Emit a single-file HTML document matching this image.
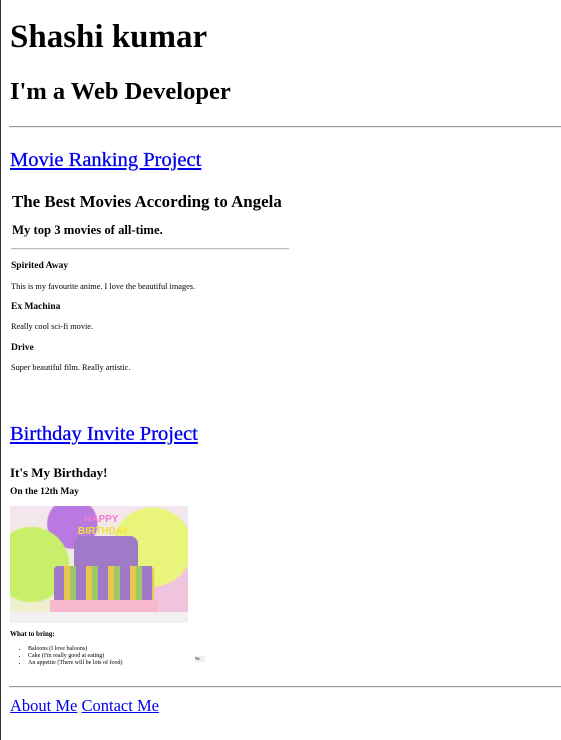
<!DOCTYPE html>
<html><head><meta charset="utf-8"><style>
html,body{margin:0;padding:0;width:561px;height:740px;overflow:hidden;background:#fff;font-family:"Liberation Serif",serif;color:#000}
body{border-left:1px solid #333;box-sizing:border-box;position:relative}
.a{position:absolute;left:9px;margin:0;white-space:nowrap;line-height:1}
a{color:#0000ee;text-decoration:underline}
.hr{position:absolute;height:0;border-top:1px solid #999;border-bottom:1px solid #eee}
ul{margin:0;padding-left:18px}
</style></head><body>
<div class="a" style="top:21px;font-size:33px;font-weight:bold">Shashi kumar</div>
<div class="a" style="top:80px;font-size:24.5px;font-weight:bold">I'm a Web Developer</div>
<div class="hr" style="left:8px;width:552px;top:126px"></div>
<div class="a" style="top:150px;font-size:20.5px;-webkit-text-stroke:0.3px #0000ee"><a>Movie Ranking Project</a></div>

<div class="a" style="top:194px;left:11px;font-size:16.9px;font-weight:bold">The Best Movies According to Angela</div>
<div class="a" style="top:224px;left:11px;font-size:12.7px;font-weight:bold">My top 3 movies of all-time.</div>
<div class="hr" style="left:10px;width:278px;top:248px;border-top-color:#bbb"></div>
<div class="a" style="top:262px;left:10px;font-size:9.5px;font-weight:bold">Spirited Away</div>
<div class="a" style="top:283px;left:10px;font-size:8.3px">This is my favourite anime. I love the beautiful images.</div>
<div class="a" style="top:303px;left:10px;font-size:9.5px;font-weight:bold">Ex Machina</div>
<div class="a" style="top:323px;left:10px;font-size:8.3px">Really cool sci-fi movie.</div>
<div class="a" style="top:344px;left:10px;font-size:9.5px;font-weight:bold">Drive</div>
<div class="a" style="top:364px;left:10px;font-size:8.3px">Super beautiful film. Really artistic.</div>

<div class="a" style="top:424px;font-size:20.5px;-webkit-text-stroke:0.3px #0000ee"><a>Birthday Invite Project</a></div>
<div class="a" style="top:466px;left:9px;font-size:13px;font-weight:bold">It's My Birthday!</div>
<div class="a" style="top:488px;left:9px;font-size:9.5px;font-weight:bold">On the 12th May</div>
<div style="position:absolute;left:9px;top:506px;width:178px;height:117px;overflow:hidden;background:radial-gradient(circle at 12% 50%,#c8ef6a 0,#c8ef6a 22%,transparent 23%),radial-gradient(circle at 35% 15%,#b87ae0 0,#b87ae0 16%,transparent 17%),radial-gradient(circle at 80% 35%,#e8f57a 0,#e8f57a 24%,transparent 25%),radial-gradient(circle at 92% 80%,#f0c4dc 0,#f0c4dc 18%,transparent 19%),linear-gradient(#f3e6ef,#eef0c8)">
 <div style="position:absolute;left:64px;top:30px;width:64px;height:36px;background:#9e7ac8;border-radius:8px"></div>
 <div style="position:absolute;left:44px;top:60px;width:100px;height:38px;background:repeating-linear-gradient(90deg,#a078c8 0 10px,#e9c74e 10px 16px,#9cc868 16px 22px);border-radius:4px"></div>
 <div style="position:absolute;left:40px;top:94px;width:108px;height:12px;background:#f5b8cc"></div>
 <div style="position:absolute;left:0;top:106px;width:178px;height:11px;background:#f2f0f0"></div>
 <div style="position:absolute;left:74px;top:8px;font:bold 10px 'Liberation Sans',sans-serif;color:#f07ad0">HAPPY</div>
 <div style="position:absolute;left:68px;top:20px;font:bold 10px 'Liberation Sans',sans-serif;color:#f0e040">BIRTHDAY</div>
</div>
<div class="a" style="top:631px;left:9px;font-size:7px;font-weight:bold">What to bring:</div>
<div style="position:absolute;left:9px;top:646px;font-size:6px;line-height:7px">
<ul><li>Baloons (I love baloons)</li><li>Cake (I'm really good at eating)</li><li>An appetite (There will be lots of food)</li></ul></div>
<div style="position:absolute;left:194px;top:656px;width:10px;height:6px;background:#eee;font-size:4px">Ne</div>

<div class="hr" style="left:8px;width:552px;top:686px"></div>
<div class="a" style="top:698px;font-size:16.5px"><a>About Me</a> <a>Contact Me</a></div>
</body></html>
